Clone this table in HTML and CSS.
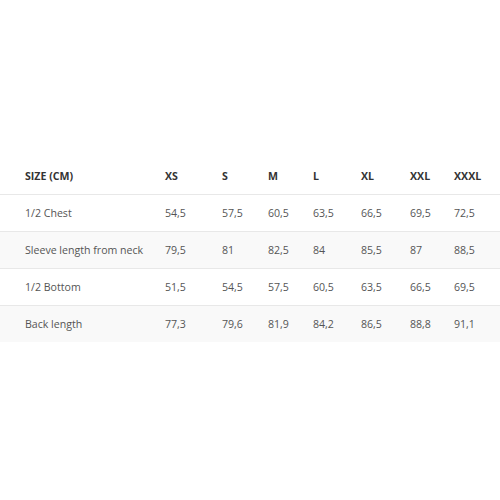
FILE: index.html
```html
<!DOCTYPE html>
<html>
<head>
<meta charset="utf-8">
<link rel="stylesheet" href="styles.css">
</head>
<body>
<table class="size-table">
  <colgroup>
    <col class="c0"><col class="c1"><col class="c2"><col class="c3"><col class="c4"><col class="c5"><col class="c6"><col class="c7">
  </colgroup>
  <thead>
    <tr><th>SIZE (CM)</th><th>XS</th><th>S</th><th>M</th><th>L</th><th>XL</th><th>XXL</th><th>XXXL</th></tr>
  </thead>
  <tbody>
    <tr><td>1/2 Chest</td><td>54,5</td><td>57,5</td><td>60,5</td><td>63,5</td><td>66,5</td><td>69,5</td><td>72,5</td></tr>
    <tr class="alt"><td>Sleeve length from neck</td><td>79,5</td><td>81</td><td>82,5</td><td>84</td><td>85,5</td><td>87</td><td>88,5</td></tr>
    <tr><td>1/2 Bottom</td><td>51,5</td><td>54,5</td><td>57,5</td><td>60,5</td><td>63,5</td><td>66,5</td><td>69,5</td></tr>
    <tr class="alt"><td>Back length</td><td>77,3</td><td>79,6</td><td>81,9</td><td>84,2</td><td>86,5</td><td>88,8</td><td>91,1</td></tr>
  </tbody>
</table>
</body>
</html>
```
FILE: styles.css
```css
html, body { margin: 0; padding: 0; background: #fff; }
body { font-family: "Open Sans", "DejaVu Sans", sans-serif; }
.size-table {
  margin-top: 158px;
  width: 500px;
  table-layout: fixed;
  border-collapse: collapse;
  font-size: 10.6px;
  color: #555;
}
.c0 { width: 165px; }
.c1 { width: 57px; }
.c2 { width: 46px; }
.c3 { width: 45px; }
.c4 { width: 48px; }
.c5 { width: 49px; }
.c6 { width: 44px; }
.c7 { width: 46px; }
.size-table th, .size-table td {
  text-align: left;
  padding: 0;
  height: 36px;
  white-space: nowrap;
  border-bottom: 1px solid #e8e8e8;
}
.size-table th:first-child, .size-table td:first-child { padding-left: 25px; }
.size-table th { font-weight: 700; color: #333; }
.size-table tbody tr:last-child td { border-bottom: none; }
.size-table .alt td { background: #f9f9f9; }
```
